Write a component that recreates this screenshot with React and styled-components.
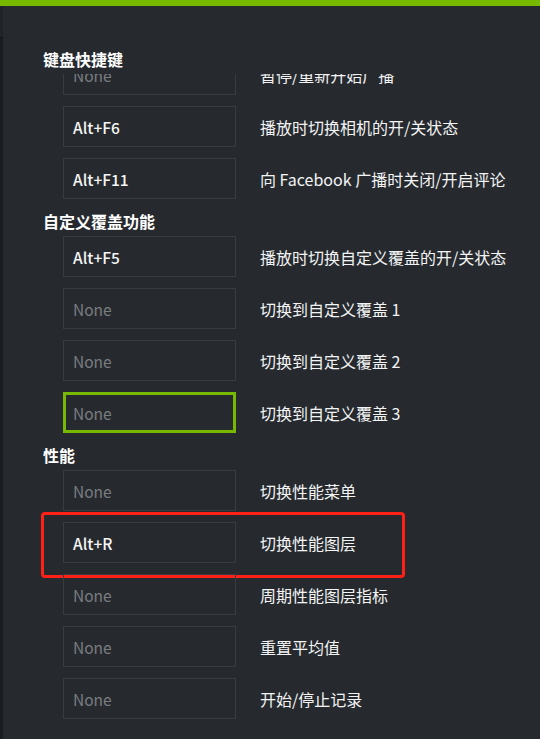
import React, { useLayoutEffect, useRef } from "react";
import styled, { createGlobalStyle, css } from "styled-components";

const GlobalStyle = createGlobalStyle`
  html, body {
    margin: 0;
    padding: 0;
    height: 100%;
    background: #262a2f;
    overflow: hidden;
  }
  #root { height: 100%; }
  * { box-sizing: border-box; }
`;

const FONT = `"Noto Sans CJK SC", "Noto Sans", sans-serif`;

const Shell = styled.div`
  display: flex;
  flex-direction: column;
  height: 739px;
  background: #262a2f;
  font-family: ${FONT};
  color: #f2f2f2;
`;

const TopBar = styled.div`
  flex: 0 0 6px;
  background: #76b900;
`;

const Frame = styled.div`
  flex: 1;
  display: flex;
  min-height: 0;
`;

const EdgeStrip = styled.div`
  flex: 0 0 3px;
  display: flex;
  flex-direction: column;
  background: #1a1c1f;
`;

const EdgeTop = styled.div`
  flex: 0 0 32px;
  background: #202327;
  border-bottom: 1px solid #15171a;
`;

const Main = styled.div`
  flex: 1;
  display: flex;
  flex-direction: column;
  min-width: 0;
`;

const TitleSpace = styled.div`
  flex: 0 0 31px;
`;

const Scroller = styled.div`
  flex: 1;
  overflow-y: auto;
  scrollbar-width: none;
  &::-webkit-scrollbar { display: none; }
  padding: 0 0 20px 40px;
`;

const Section = styled.section`
  display: flex;
  flex-direction: column;
`;

const Heading = styled.h2`
  position: sticky;
  top: 0;
  z-index: 2;
  margin: 0;
  padding: 11px 0 4px 0;
  line-height: 22px;
  font-size: 16px;
  font-weight: 700;
  color: #ffffff;
  background: #262a2f;
`;

const Rows = styled.div`
  display: flex;
  flex-direction: column;
  gap: 11px;
  padding-left: 20px;
`;

const Row = styled.div`
  position: relative;
  display: flex;
  align-items: center;
  gap: 24px;
  ${(p) =>
    p.$flagged &&
    css`
      &::after {
        content: "";
        position: absolute;
        top: -10px;
        left: -22px;
        width: 358px;
        height: 60px;
        border: 3px solid #ff2117;
        border-radius: 4px;
        pointer-events: none;
      }
    `}
`;

const KeyBox = styled.div`
  flex: 0 0 173px;
  height: 41px;
  display: flex;
  align-items: center;
  padding-left: ${(p) => (p.$focused ? "7px" : "9px")};
  border: ${(p) => (p.$focused ? "3px solid #76b900" : "1px solid #383b3f")};
  font-size: 15.5px;
  font-weight: ${(p) => (p.$empty ? 400 : 500)};
  color: ${(p) => (p.$empty ? "#7b7d80" : "#f5f5f5")};
  white-space: nowrap;
`;

const Label = styled.div`
  font-size: 16px;
  line-height: 22px;
  color: #f4f4f4;
  white-space: nowrap;
`;

const sections = [
  {
    title: "键盘快捷键",
    rows: [
      { key: null, label: "暂停/重新开始广播" },
      { key: "Alt+F6", label: "播放时切换相机的开/关状态" },
      { key: "Alt+F11", label: "向 Facebook 广播时关闭/开启评论" },
    ],
  },
  {
    title: "自定义覆盖功能",
    rows: [
      { key: "Alt+F5", label: "播放时切换自定义覆盖的开/关状态" },
      { key: null, label: "切换到自定义覆盖 1" },
      { key: null, label: "切换到自定义覆盖 2" },
      { key: null, label: "切换到自定义覆盖 3", focused: true },
    ],
  },
  {
    title: "性能",
    rows: [
      { key: null, label: "切换性能菜单" },
      { key: "Alt+R", label: "切换性能图层", flagged: true },
      { key: null, label: "周期性能图层指标" },
      { key: null, label: "重置平均值" },
      { key: null, label: "开始/停止记录" },
    ],
  },
];

export default function App() {
  const scrollRef = useRef(null);

  useLayoutEffect(() => {
    if (scrollRef.current) scrollRef.current.scrollTop = 20;
  }, []);

  return (
    <>
      <GlobalStyle />
      <Shell>
        <TopBar />
        <Frame>
          <EdgeStrip>
            <EdgeTop />
          </EdgeStrip>
          <Main>
            <TitleSpace />
            <Scroller ref={scrollRef}>
              {sections.map((s) => (
                <Section key={s.title}>
                  <Heading>{s.title}</Heading>
                  <Rows>
                    {s.rows.map((r) => (
                      <Row key={r.label} $flagged={r.flagged}>
                        <KeyBox $empty={!r.key} $focused={r.focused}>
                          {r.key || "None"}
                        </KeyBox>
                        <Label>{r.label}</Label>
                      </Row>
                    ))}
                  </Rows>
                </Section>
              ))}
            </Scroller>
          </Main>
        </Frame>
      </Shell>
    </>
  );
}
